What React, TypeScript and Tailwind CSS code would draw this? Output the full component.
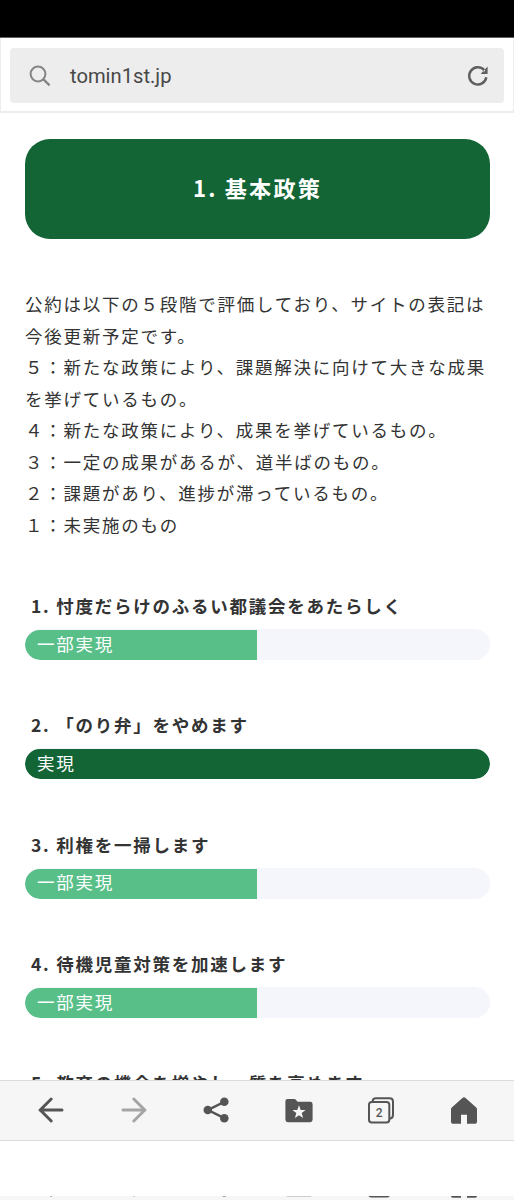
import React from 'react';
import { clsx } from 'clsx';

interface Pledge {
  title: string;
  status: 'done' | 'partial';
}

const SCALE_LINES = [
  '公約は以下の５段階で評価しており、サイトの表記は今後更新予定です。',
  '５：新たな政策により、課題解決に向けて大きな成果を挙げているもの。',
  '４：新たな政策により、成果を挙げているもの。',
  '３：一定の成果があるが、道半ばのもの。',
  '２：課題があり、進捗が滞っているもの。',
  '１：未実施のもの',
];

const PLEDGES: Pledge[] = [
  { title: '1. 忖度だらけのふるい都議会をあたらしく', status: 'partial' },
  { title: '2. 「のり弁」をやめます', status: 'done' },
  { title: '3. 利権を一掃します', status: 'partial' },
  { title: '4. 待機児童対策を加速します', status: 'partial' },
  { title: '5. 教育の機会を増やし、質を高めます', status: 'partial' },
];

function AddressBar() {
  return (
    <div className="flex h-[75px] shrink-0 border-x border-b-2 border-[#ededed] px-[9px] pt-[10px] pb-2">
      <div className="flex h-[55px] flex-1 items-center rounded bg-[#ededed] pr-[15px] pl-[19px]">
        <svg className="size-[22px] shrink-0" viewBox="0 0 22 22" fill="none" stroke="#858585" strokeWidth="2">
          <circle cx="9" cy="9" r="7.4" />
          <path d="M14.2 14.2 L20.6 20.4" strokeWidth="2.3" />
        </svg>
        <span className="ml-[19px] flex-1 pt-0.5 font-['Roboto',sans-serif] text-[20.2px] text-[#484848]">tomin1st.jp</span>
        <svg className="size-[22px] shrink-0" viewBox="0 0 22 22" fill="none" stroke="#606060" strokeWidth="2.5">
          <path d="M19.3 12.2 A8.6 8.6 0 1 1 17.2 5.1" />
          <path d="M20.6 1.6 V8.9 H13.7 L15.8 6.4 L18 6.2 V4.2 Z" fill="#606060" stroke="none" />
        </svg>
      </div>
    </div>
  );
}

function PledgeRow({ title, status }: Pledge) {
  const done = status === 'done';
  return (
    <li className="h-[119.3px]">
      <h3 className="pl-[6.5px] text-[17.5px] leading-[31.5px] font-bold tracking-[0.1em] whitespace-nowrap">{title}</h3>
      <div className="mt-[7.5px] h-[31px] overflow-hidden rounded-full bg-[#f5f6fb] pt-px">
        <div
          className={clsx(
            'flex h-full items-center pb-[3px] pl-[12.5px] text-[17.5px] leading-none tracking-[0.1em] text-white',
            done ? 'w-full rounded-full bg-[#136536]' : 'w-1/2 rounded-l-full bg-[#57bf87]'
          )}
        >
          {done ? '実現' : '一部実現'}
        </div>
      </div>
    </li>
  );
}

function BackIcon({ className }: { className?: string }) {
  return (
    <svg className={clsx('size-7', className)} viewBox="0 0 28 28" fill="none" stroke="currentColor" strokeWidth="3" strokeLinecap="round" strokeLinejoin="round">
      <path d="M25 14 H3 M14.2 3 L3.2 14 L14.2 25" />
    </svg>
  );
}

function ShareIcon() {
  return (
    <svg className="size-7" viewBox="0 0 28 28" fill="currentColor">
      <path d="M22.3 5.8 L6 14 L22.3 22.2" fill="none" stroke="currentColor" strokeWidth="2.5" />
      <circle cx="5.8" cy="14" r="4.3" />
      <circle cx="22.3" cy="5.8" r="4.3" />
      <circle cx="22.3" cy="22.2" r="4.3" />
    </svg>
  );
}

function BookmarkIcon() {
  return (
    <svg className="size-7" viewBox="0 0 28 28" fill="currentColor">
      <path d="M2.6 3 H9.4 Q10.2 3 10.8 3.7 L12.6 5.8 H25.2 Q27.6 5.8 27.6 8.2 V23.8 Q27.6 26.2 25.2 26.2 H2.8 Q.4 26.2 .4 23.8 V5.3 Q.4 3 2.6 3 Z" />
      <path
        d="M14 9.3 L15.7 13.9 L20.6 14.1 L16.7 17.1 L18.1 21.9 L14 19.2 L9.9 21.9 L11.3 17.1 L7.4 14.1 L12.3 13.9 Z"
        fill="#f6f6f6"
      />
    </svg>
  );
}

function TabsIcon({ count }: { count?: number }) {
  return (
    <svg className="size-7" viewBox="0 0 28 28" fill="none" stroke="currentColor" strokeWidth="2">
      <path d="M5.6 5.2 Q5.8 2.3 8.8 2.3 H22.6 Q26 2.3 26 5.7 V18.8 Q26 22.4 22.8 22.6" />
      <rect x="2" y="6" width="20.3" height="20.6" rx="2.8" />
      {count !== undefined && (
        <text
          x="12.1"
          y="20.8"
          textAnchor="middle"
          className="font-['Roboto',sans-serif] text-[12px] font-medium"
          fill="currentColor"
          stroke="none"
        >
          {count}
        </text>
      )}
    </svg>
  );
}

function HomeIcon() {
  return (
    <svg className="size-7" viewBox="0 0 28 28" fill="currentColor">
      <path d="M12.4 1.9 Q14 .6 15.6 1.9 L26.2 11.6 Q27 12.4 27 13.4 V26 Q27 27.8 25.2 27.8 H17 V18.8 H11 V27.8 H2.8 Q1 27.8 1 26 V13.4 Q1 12.4 1.8 11.6 Z" />
    </svg>
  );
}

function Toolbar({ tabCount }: { tabCount?: number }) {
  return (
    <nav className="grid h-[61px] shrink-0 grid-cols-6 place-items-center border-y border-[#dcdcdc] bg-[#f6f6f6] pr-[9px] pl-[10px] pb-[1.5px] text-[#555]">
      <BackIcon />
      <BackIcon className="rotate-180 text-[#a5a5a5]" />
      <ShareIcon />
      <BookmarkIcon />
      <TabsIcon count={tabCount} />
      <HomeIcon />
    </nav>
  );
}

export default function App() {
  return (
    <div className="flex h-[1200px] w-[514px] flex-col overflow-hidden bg-white">
      <div className="h-[38px] shrink-0 border-b border-[#606060] bg-black" />
      <AddressBar />

      <main className="h-[967px] shrink-0 overflow-hidden px-[24.5px] pt-[26px] font-['Noto_Sans_CJK_JP',sans-serif] text-[#333]">
        <h2 className="flex h-[100px] items-center justify-center rounded-[25px] bg-[#136536] pb-0.5 pl-px text-[22.1px] font-bold tracking-[0.1em] text-white">
          1. 基本政策
        </h2>
        <div className="mt-[49px] -mr-2 pl-[0.5px] text-[17.5px] leading-[31.5px] tracking-[0.1em]">
          {SCALE_LINES.map(line => (
            <p key={line}>{line}</p>
          ))}
        </div>
        <ul className="mt-[50px]">
          {PLEDGES.map(pledge => (
            <PledgeRow key={pledge.title} {...pledge} />
          ))}
        </ul>
      </main>

      <Toolbar tabCount={2} />

      {/* Lower edge of the toolbar, visible under the white gap */}
      <div className="mt-[55px] flex h-1 shrink-0 flex-col overflow-hidden" aria-hidden="true">
        <div className="-mt-[42px]">
          <Toolbar />
        </div>
      </div>
    </div>
  );
}
